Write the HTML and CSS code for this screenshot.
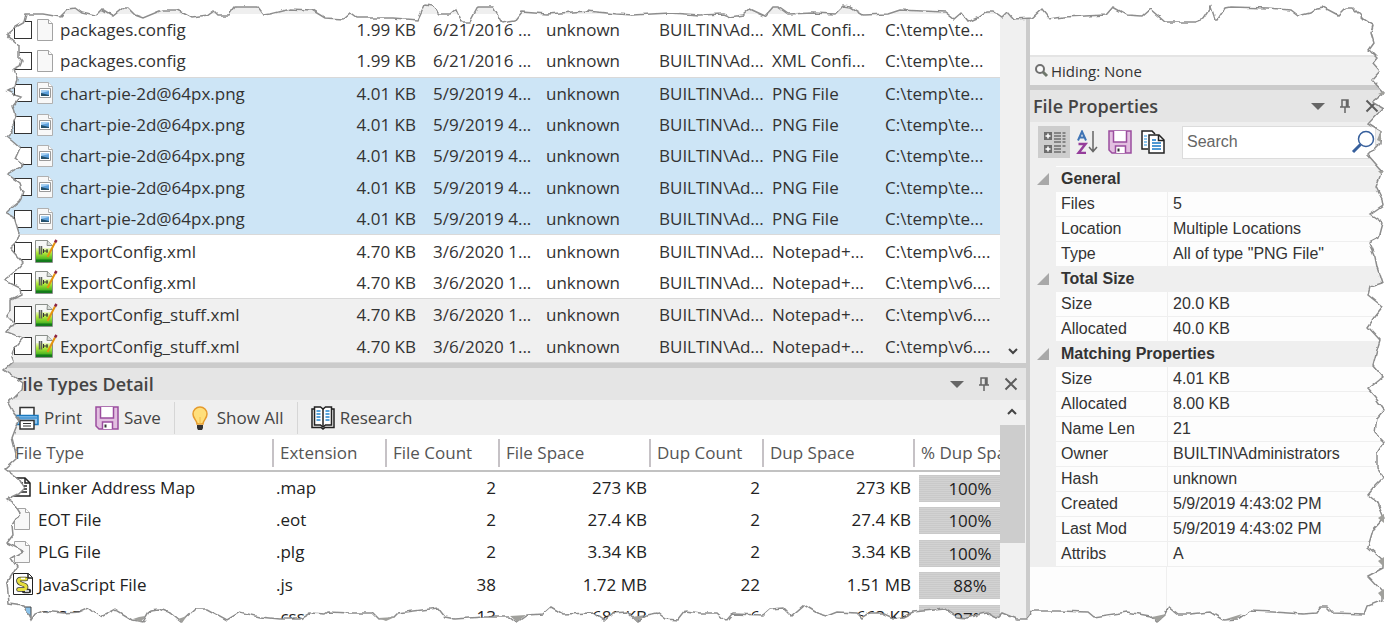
FILE: index.html
```html
<!DOCTYPE html>
<html lang="en">
<head>
    <meta charset="UTF-8">
    <meta name="viewport" content="width=device-width, initial-scale=1.0">
    <title>Duplicate Files</title>
    <link rel="stylesheet" href="styles.css">
</head>
<body>
    <!-- Shared icons -->
    <svg class="icon-defs" aria-hidden="true">
        <symbol id="page" viewBox="1 0 24 24">
            <path d="M4.5 1.5h11l4 4v17h-15z" fill="#f8f8f8" stroke="#a3a3a3"/>
            <path d="M15.500 1.500v4h4" fill="#fff" stroke="#a3a3a3"/>
        </symbol>
        <symbol id="png" viewBox="1 0 24 24">
            <path d="M4.500 1.500h11l4 4v17h-15z" fill="#f8f8f8" stroke="#b0b0b0"/>
            <path d="M15.500 1.500v4h4" fill="#fff" stroke="#b0b0b0"/>
            <path d="M6.500 7.500h11v9h-11z" fill="#fff" stroke="#9a9a9a"/>
            <path d="M8 9h8v6H8z" fill="#5c9fdc"/>
            <path d="M8 12l4 1 4 1v1H8z" fill="#24506b"/>
            <path d="M8 9h8v1l-8 2z" fill="#a7d0f2"/>
        </symbol>
        <symbol id="npp" viewBox="0 0 24 24">
            <linearGradient id="grass" x1="0" y1="0" x2="0" y2="1">
                <stop offset="0" stop-color="#eef9c8"/>
                <stop offset="0.4" stop-color="#b4ea3a"/>
                <stop offset="1" stop-color="#3fae1e"/>
            </linearGradient>
            <path d="M1.500 1.500h12l5 5v17h-17z" fill="#f6f7f6" stroke="#8a8f8a"/>
            <path d="M2 9h16v12H2z" fill="url(#grass)"/>
            <path d="M2 20.500h16v2.500H2z" fill="#137a1b"/>
            <path d="M13.500 1.500l-.5 5 5.500 0" fill="#d8dcd8" stroke="#8a8f8a"/>
            <path d="M5.500 7v8.500M7.500 7v8.500" stroke="#5b605b" stroke-width="1.500"/>
            <path d="M9 12h5M9.500 10v4M13 10v4" stroke="#333"/>
            <path d="M13.500 18L21 3.500" stroke="#e5930f" stroke-width="2"/>
            <path d="M21 3.500l1.500-2.500" stroke="#8b2440" stroke-width="2.500"/>
        </symbol>
        <symbol id="map" viewBox="0 0 24 24">
            <path d="M3 3h11l5 5v13H3z" fill="#fff" stroke="#222" stroke-width="1.500"/>
            <path d="M14 3v5h5M6 8h6M6 11h10M6 14h10M6 17h10" fill="none" stroke="#222" stroke-width="1.500"/>
        </symbol>
        <symbol id="js" viewBox="0 0 24 24">
            <path d="M2.500 1.500h15l4 4v17h-19z" fill="#fff" stroke="#222"/>
            <path d="M17 1.500v4.500h4.500" fill="none" stroke="#222" stroke-width="1.500"/>
            <path d="M15 7H9.500c-3 0-2.500 3.500 0 4.500l4 1.500c2.500 1 2 4.500-1 4.500H7.500M13 19h5" fill="none" stroke="#333" stroke-width="4.500" stroke-linecap="round"/>
            <path d="M15 7H9.500c-3 0-2.500 3.500 0 4.500l4 1.500c2.500 1 2 4.500-1 4.500H7.500" fill="none" stroke="#e6df3e" stroke-width="3" stroke-linecap="round"/>
            <path d="M14 19h4M10 6.500h4" stroke="#fff" stroke-width="1.500"/>
        </symbol>
        <symbol id="css" viewBox="0 0 24 24">
            <path d="M3 2h17v20H3z" fill="#8cc3ea" stroke="#444"/>
        </symbol>
        <symbol id="print" viewBox="0 0 24 24">
            <path d="M5 9V1.500h14V9" fill="#fff" stroke="#333" stroke-width="1.500"/>
            <path d="M1 9.500h22v9H1z" fill="#8fc5f0" stroke="#1879bf" stroke-width="1.500"/>
            <path d="M2 12h20" stroke="#1879bf"/>
            <path d="M5 14.500h14v8.500H5z" fill="#fff" stroke="#333" stroke-width="1.500"/>
            <path d="M8 17.500h8M8 20h8" stroke="#333"/>
        </symbol>
        <symbol id="save" viewBox="0 0 24 24">
            <path d="M1 1h22v22H4l-3-3z" fill="#e2bfe0" stroke="#9b4d9e" stroke-width="1.500"/>
            <path d="M5.500 1v11h13V1" fill="#fff" stroke="#9b4d9e" stroke-width="1.500"/>
            <path d="M7.500 23v-7h10v7" fill="#fff" stroke="#9b4d9e" stroke-width="1.500"/>
            <path d="M10.500 18.500v3" stroke="#333" stroke-width="2"/>
        </symbol>
        <symbol id="bulb" viewBox="0 0 24 24">
            <path d="M9 18c0-4-4-5-4-10a7 7 0 0 1 14 0c0 5-4 6-4 10z" fill="#ffdf7b" stroke="#e59a2c" stroke-width="1.500"/>
            <path d="M9 19h6v3l-1 2h-4l-1-2z" fill="#333"/>
            <path d="M12 11v7" stroke="#f2bd4c"/>
        </symbol>
        <symbol id="book" viewBox="0 0 24 24">
            <path d="M3 3H1v18.500h9l2 1.500 2-1.500h9V3h-2" fill="none" stroke="#222" stroke-width="1.500"/>
            <path d="M3.500 1h6L12 3l2.500-2h6v18h-6L12 21l-2.500-2h-6z" fill="#fff" stroke="#222" stroke-width="1.500"/>
            <path d="M12 3v18" stroke="#222" stroke-width="1.500"/>
            <path d="M5.500 5h4M5.500 8h4M5.500 11h4M5.500 14h4M14.500 5h4M14.500 8h4M14.500 11h4M14.500 14h4" stroke="#2387d0" stroke-width="1.500"/>
        </symbol>
        <symbol id="down" viewBox="0 0 16 16"><path d="M1 5h14l-7 7z" fill="#666"/></symbol>
        <symbol id="pin" viewBox="0 0 16 16"><path d="M5 9V2h6v7M9.500 2v7M3 9h10M8 9v6" fill="none" stroke="#666" stroke-width="1.500"/></symbol>
        <symbol id="close" viewBox="0 0 16 16"><path d="M2.500 2.500l11 11M13.500 2.500l-11 11" stroke="#5c5c5c" stroke-width="2"/></symbol>
        <symbol id="chev" viewBox="0 0 12 12"><path d="M2 4l4 4 4-4" fill="none" stroke="#444" stroke-width="2"/></symbol>
        <symbol id="fold" viewBox="0 0 12 12"><path d="M12 0v12H0z" fill="#a8a8a8"/></symbol>
        <symbol id="filter" viewBox="0 0 16 16">
            <circle cx="6" cy="6" r="4" fill="#fafafa" stroke="#707070" stroke-width="2"/>
            <path d="M9 9l4 4" stroke="#6f786c" stroke-width="3"/>
        </symbol>
        <symbol id="cat" viewBox="0 0 24 24">
            <path d="M2 2h8v8H2zM2 15h8v8H2z" fill="#6d6d6d"/>
            <path d="M6 3.500v5M3.500 6h5M6 16.500v5M3.500 19h5" stroke="#fff" stroke-width="1.500"/>
            <path d="M12 3h7M12 6h7M12 9h7M12 12h7M12 16h7M12 19h7M12 22h7M20.500 3h3M20.500 6h3M20.500 9h3M20.500 12h3M20.500 16h3M20.500 22h3" stroke="#6d6d6d" stroke-width="1.500"/>
        </symbol>
        <symbol id="sort" viewBox="0 0 24 24">
            <path d="M3 10.500l4-9 4 9M4.500 7.500h5" fill="none" stroke="#3f74b5" stroke-width="2"/>
            <path d="M3.500 14h7l-7 9h7.500" fill="none" stroke="#953d9b" stroke-width="2.500"/>
            <path d="M18 1v20M14 17l4 4.500 4-4.500" fill="none" stroke="#666" stroke-width="1.500"/>
        </symbol>
        <symbol id="copy" viewBox="0 0 24 24">
            <path d="M7 19H1V1h10l3 3" fill="#fff" stroke="#222" stroke-width="1.500"/>
            <path d="M3 6h3M3 9h3M3 12h3M3 15h3" stroke="#6ab4e8" stroke-width="1.500"/>
            <path d="M8 5h10l5 5v13H8z" fill="#fff" stroke="#222" stroke-width="1.500"/>
            <path d="M17.500 5v5.500H23" fill="none" stroke="#222" stroke-width="1.500"/>
            <path d="M11 10h4M11 13h9M11 16h9M11 19h9" stroke="#1677c5" stroke-width="1.500"/>
        </symbol>
        <symbol id="find" viewBox="0 0 24 24">
            <circle cx="15" cy="9" r="7.500" fill="#fff" stroke="#365f9c" stroke-width="1.500"/>
            <path d="M9.500 14.500L2 22" stroke="#365f9c" stroke-width="3"/>
        </symbol>
    </svg>

    <div class="app">
        <main class="left">
            <section class="list-pane">
                <div class="list-scroll">
                    <div class="list-head"></div>
                    <table class="files">
                        <colgroup>
                            <col><col class="c-col"><col class="c-col"><col class="c-col"><col class="c-col"><col class="c-col"><col class="c-last">
                        </colgroup>
                        <tbody>
                            <tr><td><label><input type="checkbox"><svg class="icon"><use href="#page"/></svg>packages.config</label></td><td class="num">1.99 KB</td><td>6/21/2016 ...</td><td>unknown</td><td>BUILTIN\Ad...</td><td>XML Confi...</td><td>C:\temp\te...</td></tr>
                            <tr><td><label><input type="checkbox"><svg class="icon"><use href="#page"/></svg>packages.config</label></td><td class="num">1.99 KB</td><td>6/21/2016 ...</td><td>unknown</td><td>BUILTIN\Ad...</td><td>XML Confi...</td><td>C:\temp\te...</td></tr>
                        </tbody>
                        <tbody class="selected">
                            <tr><td><label><input type="checkbox"><svg class="icon"><use href="#png"/></svg>chart-pie-2d@64px.png</label></td><td class="num">4.01 KB</td><td>5/9/2019 4...</td><td>unknown</td><td>BUILTIN\Ad...</td><td>PNG File</td><td>C:\temp\te...</td></tr>
                            <tr><td><label><input type="checkbox"><svg class="icon"><use href="#png"/></svg>chart-pie-2d@64px.png</label></td><td class="num">4.01 KB</td><td>5/9/2019 4...</td><td>unknown</td><td>BUILTIN\Ad...</td><td>PNG File</td><td>C:\temp\te...</td></tr>
                            <tr><td><label><input type="checkbox"><svg class="icon"><use href="#png"/></svg>chart-pie-2d@64px.png</label></td><td class="num">4.01 KB</td><td>5/9/2019 4...</td><td>unknown</td><td>BUILTIN\Ad...</td><td>PNG File</td><td>C:\temp\te...</td></tr>
                            <tr><td><label><input type="checkbox"><svg class="icon"><use href="#png"/></svg>chart-pie-2d@64px.png</label></td><td class="num">4.01 KB</td><td>5/9/2019 4...</td><td>unknown</td><td>BUILTIN\Ad...</td><td>PNG File</td><td>C:\temp\te...</td></tr>
                            <tr><td><label><input type="checkbox"><svg class="icon"><use href="#png"/></svg>chart-pie-2d@64px.png</label></td><td class="num">4.01 KB</td><td>5/9/2019 4...</td><td>unknown</td><td>BUILTIN\Ad...</td><td>PNG File</td><td>C:\temp\te...</td></tr>
                        </tbody>
                        <tbody>
                            <tr><td><label><input type="checkbox"><svg class="icon"><use href="#npp"/></svg>ExportConfig.xml</label></td><td class="num">4.70 KB</td><td>3/6/2020 1...</td><td>unknown</td><td>BUILTIN\Ad...</td><td>Notepad+...</td><td>C:\temp\v6....</td></tr>
                            <tr><td><label><input type="checkbox"><svg class="icon"><use href="#npp"/></svg>ExportConfig.xml</label></td><td class="num">4.70 KB</td><td>3/6/2020 1...</td><td>unknown</td><td>BUILTIN\Ad...</td><td>Notepad+...</td><td>C:\temp\v6....</td></tr>
                        </tbody>
                        <tbody class="shaded">
                            <tr><td><label><input type="checkbox"><svg class="icon"><use href="#npp"/></svg>ExportConfig_stuff.xml</label></td><td class="num">4.70 KB</td><td>3/6/2020 1...</td><td>unknown</td><td>BUILTIN\Ad...</td><td>Notepad+...</td><td>C:\temp\v6....</td></tr>
                            <tr><td><label><input type="checkbox"><svg class="icon"><use href="#npp"/></svg>ExportConfig_stuff.xml</label></td><td class="num">4.70 KB</td><td>3/6/2020 1...</td><td>unknown</td><td>BUILTIN\Ad...</td><td>Notepad+...</td><td>C:\temp\v6....</td></tr>
                        </tbody>
                    </table>
                </div>
                <div class="scrollbar at-end">
                    <button type="button" class="scroll-button" aria-label="Scroll down"><svg class="chevron"><use href="#chev"/></svg></button>
                </div>
            </section>

            <header class="pane-title splitter">
                <h2 class="indent">File Types Detail</h2>
                <div class="pane-buttons">
                    <button type="button" aria-label="Menu"><svg><use href="#down"/></svg></button>
                    <button type="button" aria-label="Pin"><svg><use href="#pin"/></svg></button>
                    <button type="button" aria-label="Close"><svg><use href="#close"/></svg></button>
                </div>
            </header>

            <section class="detail-pane">
                <div class="detail-body">
                    <div class="toolbar">
                        <button type="button"><svg class="icon"><use href="#print"/></svg>Print</button>
                        <button type="button"><svg class="icon"><use href="#save"/></svg>Save</button>
                        <span class="separator"></span>
                        <button type="button"><svg class="icon"><use href="#bulb"/></svg>Show All</button>
                        <span class="separator"></span>
                        <button type="button"><svg class="icon"><use href="#book"/></svg>Research</button>
                    </div>
                    <table class="types">
                        <colgroup>
                            <col><col class="c-col"><col class="c-col"><col class="c-space"><col class="c-col"><col class="c-space"><col class="c-pct">
                        </colgroup>
                        <thead>
                            <tr><th><span>File Type</span></th><th><span>Extension</span></th><th><span>File Count</span></th><th><span>File Space</span></th><th><span>Dup Count</span></th><th><span>Dup Space</span></th><th><span>% Dup Space</span></th></tr>
                        </thead>
                        <tbody>
                            <tr><td><div class="type"><svg class="icon"><use href="#map"/></svg>Linker Address Map</div></td><td>.map</td><td class="num">2</td><td class="num">273 KB</td><td class="num">2</td><td class="num">273 KB</td><td class="pct"><div class="bar">100%</div></td></tr>
                            <tr><td><div class="type"><svg class="icon"><use href="#page"/></svg>EOT File</div></td><td>.eot</td><td class="num">2</td><td class="num">27.4 KB</td><td class="num">2</td><td class="num">27.4 KB</td><td class="pct"><div class="bar">100%</div></td></tr>
                            <tr><td><div class="type"><svg class="icon"><use href="#page"/></svg>PLG File</div></td><td>.plg</td><td class="num">2</td><td class="num">3.34 KB</td><td class="num">2</td><td class="num">3.34 KB</td><td class="pct"><div class="bar">100%</div></td></tr>
                            <tr><td><div class="type"><svg class="icon"><use href="#js"/></svg>JavaScript File</div></td><td>.js</td><td class="num">38</td><td class="num">1.72 MB</td><td class="num">22</td><td class="num">1.51 MB</td><td class="pct"><div class="bar">88%</div></td></tr>
                            <tr><td><div class="type"><svg class="icon"><use href="#css"/></svg>CSS File</div></td><td>.css</td><td class="num">13</td><td class="num">682 KB</td><td class="num">6</td><td class="num">663 KB</td><td class="pct"><div class="bar">97%</div></td></tr>
                        </tbody>
                    </table>
                </div>
                <div class="scrollbar">
                    <button type="button" class="scroll-button up" aria-label="Scroll up"><svg class="chevron"><use href="#chev"/></svg></button>
                    <div class="thumb"></div>
                </div>
            </section>
        </main>

        <aside class="right">
            <div class="preview"></div>
            <div class="hiding"><svg><use href="#filter"/></svg>Hiding: None</div>
            <header class="pane-title splitter">
                <h2>File Properties</h2>
                <div class="pane-buttons">
                    <button type="button" aria-label="Menu"><svg><use href="#down"/></svg></button>
                    <button type="button" aria-label="Pin"><svg><use href="#pin"/></svg></button>
                    <button type="button" aria-label="Close"><svg><use href="#close"/></svg></button>
                </div>
            </header>
            <div class="prop-tools">
                <button type="button" class="active" aria-label="Categorized"><svg class="icon"><use href="#cat"/></svg></button>
                <button type="button" aria-label="Alphabetical"><svg class="icon"><use href="#sort"/></svg></button>
                <button type="button" aria-label="Save"><svg class="icon"><use href="#save"/></svg></button>
                <button type="button" aria-label="Copy"><svg class="icon"><use href="#copy"/></svg></button>
                <div class="search">
                    <input type="text" placeholder="Search" aria-label="Search">
                    <svg class="icon"><use href="#find"/></svg>
                </div>
            </div>
            <table class="props">
                <colgroup><col class="c-fold"><col class="c-name"><col></colgroup>
                <tbody>
                    <tr class="group"><td><button type="button" aria-label="Collapse General"><svg><use href="#fold"/></svg></button></td><th colspan="2">General</th></tr>
                    <tr><td></td><td>Files</td><td>5</td></tr>
                    <tr><td></td><td>Location</td><td>Multiple Locations</td></tr>
                    <tr><td></td><td>Type</td><td>All of type "PNG File"</td></tr>
                    <tr class="group"><td><button type="button" aria-label="Collapse Total Size"><svg><use href="#fold"/></svg></button></td><th colspan="2">Total Size</th></tr>
                    <tr><td></td><td>Size</td><td>20.0 KB</td></tr>
                    <tr><td></td><td>Allocated</td><td>40.0 KB</td></tr>
                    <tr class="group"><td><button type="button" aria-label="Collapse Matching Properties"><svg><use href="#fold"/></svg></button></td><th colspan="2">Matching Properties</th></tr>
                    <tr><td></td><td>Size</td><td>4.01 KB</td></tr>
                    <tr><td></td><td>Allocated</td><td>8.00 KB</td></tr>
                    <tr><td></td><td>Name Len</td><td>21</td></tr>
                    <tr><td></td><td>Owner</td><td>BUILTIN\Administrators</td></tr>
                    <tr><td></td><td>Hash</td><td>unknown</td></tr>
                    <tr><td></td><td>Created</td><td>5/9/2019 4:43:02 PM</td></tr>
                    <tr><td></td><td>Last Mod</td><td>5/9/2019 4:43:02 PM</td></tr>
                    <tr><td></td><td>Attribs</td><td>A</td></tr>
                </tbody>
            </table>
            <div class="props-rest"></div>
        </aside>

        <!-- Torn paper edge over the whole window -->
        <svg class="torn" viewBox="0 0 1400 637" preserveAspectRatio="none" aria-hidden="true">
            <filter id="rough" filterUnits="userSpaceOnUse" x="-20" y="-20" width="1440" height="677">
                <feTurbulence type="fractalNoise" baseFrequency="0.14" numOctaves="1" seed="4"/>
                <feDisplacementMap in="SourceGraphic" scale="5" xChannelSelector="R" yChannelSelector="G"/>
            </filter>
            <path filter="url(#rough)" fill-rule="evenodd" d="M-30-30H1430V667H-30Z
                M26 14L24 22 15 27 7 34 12 40 19 46 19 57 22 61 20 66 14 69 17 78 15 87 7 91 15 95 21 97 17 101 13 106 16 116 12 125 13 131 7 137 12 141 20 148 15 159 23 165 7 174 20 183 23 192 21 199
                19 202 13 207 7 213 14 217 19 233 16 242 10 248 23 263 17 270 4 280 20 288 21 295 11 300 11 310 7 316 14 323 7 332 23 338 13 350 11 357 13 362 4 370 23 383 22 389 8 403 13 412 19 420 15 430
                12 438 15 450 17 458 5 469 20 480 25 488 20 493 7 499 15 505 20 513 12 525 13 535 7 543 23 551 11 558 17 567 7 583 9 603 23 605 31 620
                35 614 43 611 63 613 80 612 89 608 100 617 115 609 133 620 143 622 150 610 160 609 170 613 181 622 195 609 207 609 227 620 240 612 260 617 280 619 300 619 310 613 325 614 328 612 350 613
                372 613 378 619 393 618 398 613 438 608 445 617 455 619 483 617 510 617 517 622 527 615 543 614 551 607 563 614 593 613 604 621 613 613 627 612 637 621 647 615 657 613 665 619 678 620 685 611 700 613
                717 613 726 621 732 614 763 615 770 609 783 608 791 616 804 605 817 613 827 616 837 612 857 613 862 618 870 613 882 613 893 618 903 617 913 612 945 609 957 617 967 618 977 615 987 613 997 618 1002 613 1017 619 1027 619
                1033 611 1058 611 1088 612 1094 617 1127 612 1150 616 1157 622 1165 615 1169 607 1178 614 1190 614 1210 612 1223 620 1238 619 1250 611 1273 612 1303 614 1316 613 1320 607 1327 607 1333 613 1365 614 1368 606 1383 600
                1383 592 1368 576 1383 568 1383 560 1368 547 1373 530 1384 518 1378 503 1368 495 1376 485 1383 478 1377 467 1377 453 1384 442 1375 433 1377 418 1384 410 1375 397 1368 389 1383 377 1373 365 1377 350 1380 340 1368 327 1375 317 1383 307 1368 295 1370 287 1382 283 1377 267 1375 257 1369 243 1379 238 1383 223 1370 214 1383 205
                1382 199 1376 187 1382 171 1368 155 1380 143 1381 132 1368 124 1383 108 1373 102 1384 93 1372 80 1380 71 1373 63 1377 58 1369 50 1374 43 1371 33 1373 25 1365 20 1353 8 1345 8 1338 15 1323 7 1317 8 1310 13 1298 16 1290 10 1268 8 1230 7 1225 8 1218 19 1215 19 1211 7 1203 19 1195 22 1165 22 1150 9 1142 16 1127 15 1113 7 1106 15 1063 17 1050 19 1042 9 1032 18
                1013 19 1007 12 1002 17 993 11 987 11 977 18 968 22 961 13 954 19 945 12 900 10 888 14 863 15 850 7 843 6 835 14 813 13 788 14 778 7 773 7 765 16 750 9 743 15 730 17 723 14 700 15
                670 13 633 15 617 14 587 11 547 14 522 12 515 21 502 23 493 7 478 7 470 22 462 22 456 9 450 14 440 14 432 6 425 5 418 20 393 18 357 18 350 13
                343 19 325 18 312 10 290 9 270 14 263 15 257 7 235 7 229 15 218 15 214 11 207 16 192 18 183 13 177 10 162 10 143 18 135 15 128 8 123 8 113 16 102 9 95 16 82 13 75 8 68 9 60 17 43 14Z"/>
            <path class="curl" d="M133 619l8 3 4-6-6 1zM178 619l4 4 5-7zM378 618l8 3 9-4zM510 616l7 6 9-7zM632 617l5 5 8-7zM1152 617l6 5 8-8zM1226 619l9 1 7-6zM1384 514l-6 4 6 5zM1384 557l-6 4 6 6zM1384 589l-6 4 6 7zM1381 130v12l-4-2zM1378 94l6-3v4zM1378 171h6l-3 3z"/>
        </svg>
    </div>
</body>
</html>
```
FILE: styles.css
```css
* {
    box-sizing: border-box;
}

body {
    margin: 0;
    background: #fff;
    color: #333;
    font-family: "Open Sans", "Noto Sans", sans-serif;
    font-size: 17px;
}

button {
    display: flex;
    align-items: center;
    padding: 0;
    border: none;
    background: none;
    color: inherit;
    font: inherit;
    cursor: pointer;
}

table {
    width: 100%;
    border-collapse: collapse;
    table-layout: fixed;
}

td, th {
    padding: 0;
    text-align: left;
    white-space: nowrap;
    overflow: hidden;
}

.icon-defs {
    position: absolute;
    width: 0;
    height: 0;
}

.icon {
    flex: none;
    width: 24px;
    height: 24px;
}

.app {
    position: relative;
    display: flex;
    min-height: 100vh;
    overflow: hidden;
}

.left {
    flex: 1;
    min-width: 0;
    display: flex;
    flex-direction: column;
    border-right: 4px solid #cbcbcb;
}

.right {
    flex: none;
    width: 370px;
    display: flex;
    flex-direction: column;
    background: #fdfdfd;
}

/* File list */
.list-pane {
    display: flex;
}

.list-scroll {
    flex: 1;
    min-width: 0;
}

.list-head {
    height: 14px;
    background: #efefef;
}

.files {
    height: 349px;
}

.files td {
    padding-left: 8px;
}

.files td:first-child {
    padding-left: 14px;
}

.files .num {
    padding-right: 9px;
    text-align: right;
}

.files tbody {
    border-bottom: 1px solid #d9d9d9;
}

.files label {
    display: flex;
    align-items: center;
    gap: 2px;
}

.files input {
    appearance: none;
    flex: none;
    width: 18px;
    height: 18px;
    margin: 0;
    border: 1px solid #333;
    background: #fff;
}

.selected {
    background: #cde5f6;
}

.shaded {
    background: #f0f0f0;
}

.c-col {
    width: 113px;
}

.c-last {
    width: 123px;
}

.c-space {
    width: 151px;
}

.c-pct {
    width: 87px;
}

.num {
    text-align: right;
}

/* Scrollbars */
.scrollbar {
    flex: none;
    width: 26px;
    padding-right: 1px;
    display: flex;
    flex-direction: column;
    background: #f0f0f0;
}

.at-end {
    justify-content: flex-end;
}

.scroll-button {
    justify-content: center;
    height: 25px;
}

.up {
    transform: rotate(180deg);
}

.chevron {
    width: 12px;
    height: 12px;
}

.thumb {
    height: 118px;
    background: #cdcdcd;
}

/* Pane titles */
.pane-title {
    display: flex;
    align-items: center;
    justify-content: space-between;
    height: 37px;
    padding: 0 7px 0 3px;
    background: #e5e5e5;
}

.splitter {
    border-top: 5px solid #cbcbcb;
}

.pane-title h2 {
    margin: 0;
    font-size: 18px;
    font-weight: 600;
    color: #444;
}

.pane-title .indent {
    padding-left: 10px;
}

.pane-buttons {
    display: flex;
    gap: 11px;
}

.pane-buttons svg {
    width: 16px;
    height: 16px;
}

/* File types detail */
.detail-pane {
    flex: 1;
    display: flex;
}

.detail-body {
    flex: 1;
    min-width: 0;
    overflow: hidden;
}

.toolbar {
    display: flex;
    align-items: center;
    gap: 13px;
    height: 35px;
    padding-left: 15px;
    background: #efefef;
    color: #444;
}

.toolbar button {
    gap: 5px;
}

.separator {
    width: 1px;
    height: 32px;
    background: #d6d6d6;
}

.types thead tr {
    height: 36px;
    border-bottom: 2px solid #c2c2c2;
}

.types th {
    font-weight: 400;
    color: #555;
}

.types th span {
    display: block;
    padding-left: 6px;
    border-left: 2px solid #c6c2c6;
    line-height: 28px;
}

.types th:first-child span {
    padding-left: 15px;
    border-left: none;
}

.types tbody tr {
    height: 33px;
}

.types tbody tr:nth-child(even) {
    height: 32px;
}

.types td {
    padding: 0 0 2px 4px;
    color: #222;
}

.types td:first-child {
    padding-left: 11px;
}

.types .num {
    padding-right: 2px;
}

.types .pct {
    padding: 1px 0 0 6px;
}

.type {
    display: flex;
    align-items: center;
    gap: 3px;
}

.bar {
    width: 102px;
    background: repeating-linear-gradient(#c9c9c9 0 1px, #d2d2d2 1px 2px);
    line-height: 27px;
    text-align: center;
}

/* File properties */
.preview {
    height: 57px;
    border-bottom: 2px solid #e4e4e4;
    background: #fff;
}

.hiding {
    display: flex;
    align-items: center;
    gap: 1px;
    height: 28px;
    padding-left: 4px;
    background: #f1f1f1;
    font-size: 15px;
}

.hiding svg {
    width: 16px;
    height: 16px;
}

.right .pane-title {
    padding-right: 20px;
}

.prop-tools {
    display: flex;
    align-items: center;
    gap: 1px;
    height: 44px;
    padding: 0 24px 4px 8px;
    background: #efefef;
}

.prop-tools button {
    justify-content: center;
    width: 32px;
    height: 32px;
}

.prop-tools .active {
    background: #cdcdcd;
}

.search {
    flex: 1;
    min-width: 0;
    display: flex;
    align-items: center;
    height: 33px;
    margin-left: 12px;
    border: 1px solid #dcdcdc;
    background: #fff;
}

.search input {
    flex: 1;
    min-width: 0;
    padding: 0 4px;
    border: none;
    outline: none;
    background: none;
    font: 16px "Liberation Sans", Arial, sans-serif;
}

.search input::placeholder {
    color: #666;
}

.props {
    font: 16px "Liberation Sans", Arial, sans-serif;
}

.props tr {
    height: 25px;
}

.props td {
    padding-left: 5px;
    border: 1px solid #efefef;
}

.props td:first-child,
.props .group {
    background: #efefef;
}

.props td:first-child {
    padding-left: 6px;
}

.props th {
    padding-left: 5px;
}

.props svg {
    width: 12px;
    height: 12px;
}

.c-fold {
    width: 25px;
}

.c-name {
    width: 112px;
}

.props-rest {
    flex: 1;
    width: 137px;
    border-right: 1px solid #efefef;
}

/* Torn edge */
.torn {
    position: absolute;
    top: 0;
    left: 0;
    width: 100%;
    height: 100%;
    fill: #fff;
    stroke: #8d8d8d;
    stroke-width: 1.5px;
    pointer-events: none;
}

.curl {
    fill: #a0a09c;
    stroke: none;
}
```
